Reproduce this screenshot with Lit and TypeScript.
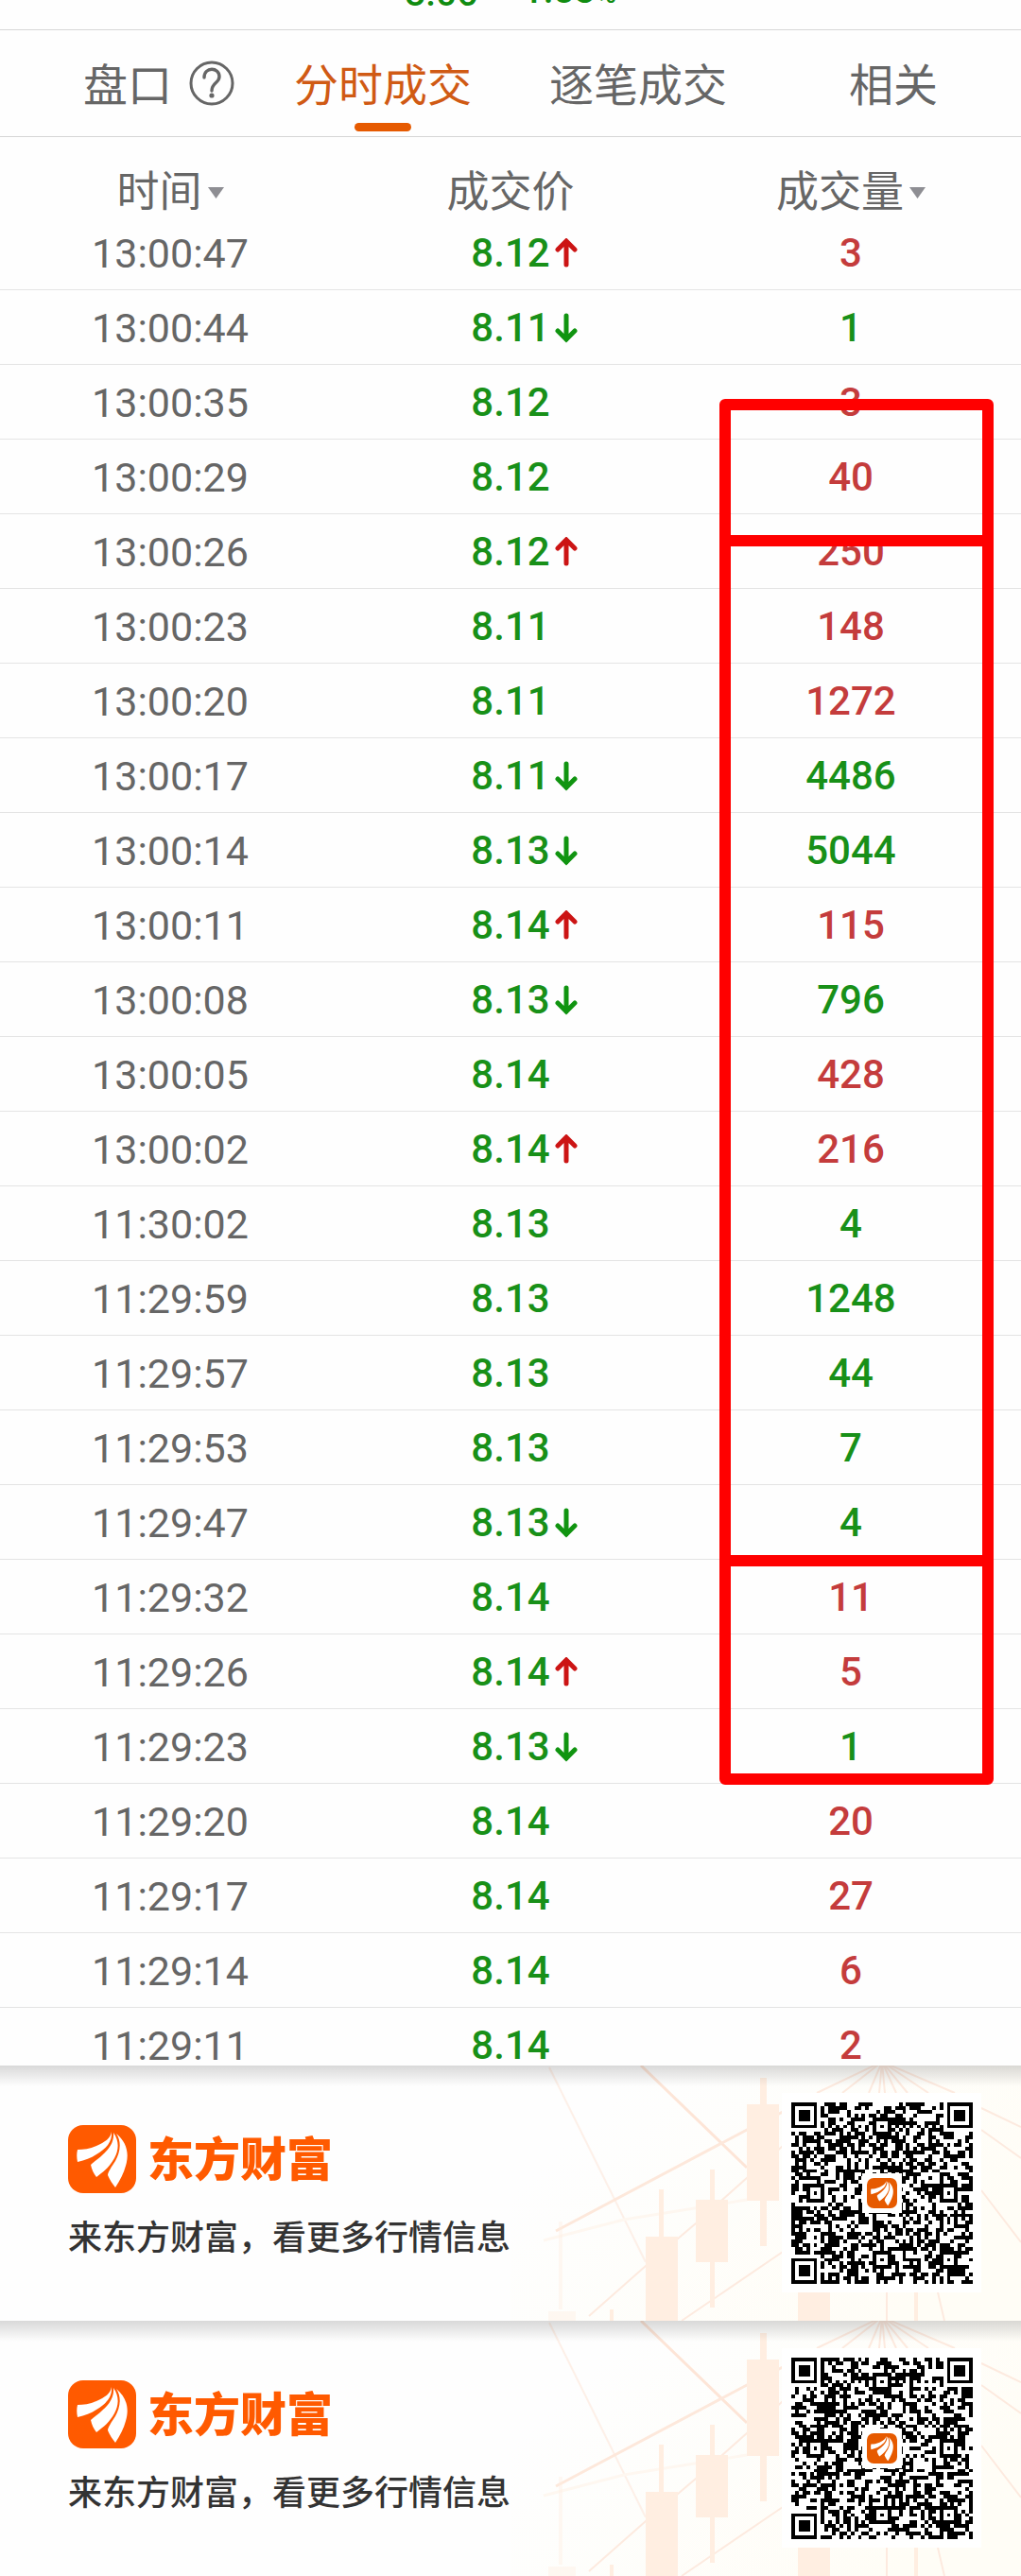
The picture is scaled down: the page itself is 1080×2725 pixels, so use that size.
import { LitElement, html, css, svg } from "lit";
import { customElement, property } from "lit/decorators.js";

type Dir = "up" | "down" | "";
type Side = "buy" | "sell";
type Tick = [time: string, price: string, dir: Dir, volume: string, side: Side];

const TICKS: Tick[] = [
  ["13:00:47", "8.12", "up", "3", "buy"],
  ["13:00:44", "8.11", "down", "1", "sell"],
  ["13:00:35", "8.12", "", "3", "buy"],
  ["13:00:29", "8.12", "", "40", "buy"],
  ["13:00:26", "8.12", "up", "250", "buy"],
  ["13:00:23", "8.11", "", "148", "buy"],
  ["13:00:20", "8.11", "", "1272", "buy"],
  ["13:00:17", "8.11", "down", "4486", "sell"],
  ["13:00:14", "8.13", "down", "5044", "sell"],
  ["13:00:11", "8.14", "up", "115", "buy"],
  ["13:00:08", "8.13", "down", "796", "sell"],
  ["13:00:05", "8.14", "", "428", "buy"],
  ["13:00:02", "8.14", "up", "216", "buy"],
  ["11:30:02", "8.13", "", "4", "sell"],
  ["11:29:59", "8.13", "", "1248", "sell"],
  ["11:29:57", "8.13", "", "44", "sell"],
  ["11:29:53", "8.13", "", "7", "sell"],
  ["11:29:47", "8.13", "down", "4", "sell"],
  ["11:29:32", "8.14", "", "11", "buy"],
  ["11:29:26", "8.14", "up", "5", "buy"],
  ["11:29:23", "8.13", "down", "1", "sell"],
  ["11:29:20", "8.14", "", "20", "buy"],
  ["11:29:17", "8.14", "", "27", "buy"],
  ["11:29:14", "8.14", "", "6", "buy"],
  ["11:29:11", "8.14", "", "2", "buy"],
];

const QR_SIZE = 49;
const ALIGN = [[24, 6], [6, 24], [42, 24], [24, 42], [42, 42]];

/* Builds the dark modules of a 49x49 code as one path. */
function qrPath(seed: number): string {
  let s = seed;
  const next = () => {
    s = (Math.imul(s, 1664525) + 1013904223) >>> 0;
    return s / 4294967296;
  };
  const finder = (x: number, y: number, cx: number, cy: number): boolean | null => {
    const d = Math.max(Math.abs(x - cx), Math.abs(y - cy));
    if (d > 4) return null;
    return d !== 4 && d !== 2;
  };
  let path = "";
  for (let y = 0; y < QR_SIZE; y++) {
    for (let x = 0; x < QR_SIZE; x++) {
      let dark = next() < 0.52;
      if (x === 6 || y === 6) dark = (x + y) % 2 === 0;
      for (const [ax, ay] of ALIGN) {
        const d = Math.max(Math.abs(x - ax), Math.abs(y - ay));
        if (d <= 2) dark = d !== 1;
      }
      for (const [cx, cy] of [[3, 3], [45, 3], [3, 45]]) {
        const f = finder(x, y, cx, cy);
        if (f !== null) dark = f;
      }
      if (dark) path += `M${x} ${y}h1v1h-1z`;
    }
  }
  return path;
}

const mark = (fill: string) => svg`
  <rect width="72" height="72" rx="16" fill=${fill}></rect>
  <path fill="#fff" d="M46 7C45 14 39 18 30 22C23 25 16 26 10 26C9 30 9 34 10 39C18 37 24 35 30 31C40 25 47 18 46 7Z"></path>
  <path fill="#fff" d="M48 8C49 17 44 25 37 31C32 36 27 39 24 42C25 47 27 51 30 55C38 49 44 44 49 35C54 26 54 16 48 8Z"></path>
  <path fill="#fff" d="M51 9C57 18 55 29 50 38C46 44 42 50 42 53C44 58 47 62 50 66C55 58 59 51 61 43C65 30 62 18 51 9Z"></path>
`;

@customElement("promo-banner")
export class PromoBanner extends LitElement {
  @property({ type: Number }) seed = 1;

  static styles = css`
    :host {
      display: block;
    }
    .banner {
      position: relative;
      display: flex;
      align-items: flex-start;
      justify-content: space-between;
      height: 270px;
      box-sizing: border-box;
      padding: 29px 42px 0 72px;
      overflow: hidden;
      background: #fefefe;
    }
    .art {
      position: absolute;
      top: 0;
      right: 0;
      width: 540px;
      height: 270px;
    }
    .shade {
      position: absolute;
      top: 0;
      left: 0;
      right: 0;
      height: 22px;
      background: linear-gradient(rgba(0, 0, 0, 0.15), rgba(0, 0, 0, 0));
    }
    .info {
      position: relative;
      display: flex;
      flex-direction: column;
      gap: 22px;
      padding-top: 34px;
    }
    .brand {
      display: flex;
      align-items: center;
      gap: 12px;
      height: 72px;
    }
    .logo {
      width: 72px;
      height: 72px;
    }
    .name {
      padding-top: 4px;
      color: #ff5a00;
      font-size: 49px;
      font-weight: 900;
      line-height: 72px;
    }
    .slogan {
      margin: 0;
      color: #333;
      font-size: 36px;
      font-weight: 500;
      line-height: 52px;
      white-space: nowrap;
    }
    .code {
      position: relative;
      width: 211px;
      height: 211px;
      flex: none;
    }
  `;

  render() {
    return html`
      <section class="banner">
        <svg class="art" viewBox="0 0 540 270" aria-hidden="true">
          <defs>
            <linearGradient id="tint" x1="0" y1="0" x2="1" y2="0.5">
              <stop offset="0.2" stop-color="#fffdf6" stop-opacity="0"></stop>
              <stop offset="1" stop-color="#fffdf6"></stop>
            </linearGradient>
          </defs>
          <rect width="540" height="270" fill="url(#tint)"></rect>
          <g fill="none" stroke="#fdeadf" stroke-width="2">
            <path d="M138 0L250 108" stroke="#fde5d7" stroke-width="3"></path>
            <path d="M41 2L143 208" stroke="#fdf0e8"></path>
            <path d="M48 175L250 68L288 49" stroke="#fde8db" stroke-width="3"></path>
            <path d="M83 265L143 212L196 167L288 85"></path>
            <path d="M181 270L288 197"></path>
            <path d="M35 185L120 163L250 142" stroke="#fef7f0" stroke-width="3"></path>
            <path d="M393 -4L324 29M393 -4L351 29M393 -4L379 29M393 -4L390 29M393 -4L396 29M393 -4L408 29M393 -4L420 29M393 -4L442 29M393 -4L470 29"></path>
            <path d="M498 45L540 65M498 68L540 98M498 132L540 187M398 240V270M452 240L459 270"></path>
          </g>
          <g fill="#ffeee1">
            <path d="M157 131h5v50h-5zM143 181h34v89h-34z"></path>
            <path d="M211 110h5v32h-5zM211 208h5v48h-5zM196 142h34v66h-34z"></path>
            <path d="M264 13h7v28h-7zM264 143h7v48h-7zM250 41h34v102h-34z"></path>
            <path d="M304 240h34v30h-34zM427 240h4v30h-4zM105 258h4v12h-4z"></path>
            <path d="M51 165h4v93h-4zM40 260h29v10h-29z" opacity="0.4"></path>
          </g>
        </svg>
        <div class="shade"></div>
        <div class="info">
          <div class="brand">
            <svg class="logo" viewBox="0 0 72 72" aria-hidden="true">${mark("#ff5a00")}</svg>
            <span class="name">东方财富</span>
          </div>
          <p class="slogan">来东方财富，看更多行情信息</p>
        </div>
        <svg class="code" viewBox="0 0 211 211" aria-hidden="true">
          <rect width="211" height="211" fill="#fff"></rect>
          <svg x="10" y="10" width="192" height="192" viewBox="0 0 49 49" shape-rendering="crispEdges">
            <path d=${qrPath(this.seed)} fill="#000"></path>
          </svg>
          <rect x="85" y="85" width="42" height="42" fill="#fff"></rect>
          <svg x="90" y="90" width="32" height="32" viewBox="0 0 72 72">${mark("#e65a00")}</svg>
        </svg>
      </section>
    `;
  }
}

@customElement("app-root")
export class AppRoot extends LitElement {
  static styles = css`
    :host {
      display: block;
      background: #fefefe;
      color: #666;
      font-family: Roboto, "Noto Sans CJK SC", sans-serif;
    }
    .quote {
      display: flex;
      align-items: flex-end;
      justify-content: center;
      gap: 34px;
      height: 31px;
      overflow: hidden;
      border-bottom: 1px solid #d6d6d6;
      color: #108c10;
      font-size: 39px;
      font-weight: 500;
      line-height: 76px;
    }
    .unit {
      font-size: 30px;
    }
    .tabs {
      display: grid;
      grid-template-columns: repeat(4, 1fr);
      height: 112px;
      border-bottom: 1px solid #d6d6d6;
    }
    .tab {
      display: grid;
      grid-template-columns: 1fr auto 1fr;
      grid-template-rows: 104px 8px;
      align-items: center;
      padding: 0;
      border: 0;
      background: none;
      color: inherit;
      font: inherit;
      font-size: 47px;
      line-height: 68px;
      white-space: nowrap;
    }
    .tab::after {
      content: "";
      grid-area: 2 / 2;
      justify-self: center;
      align-self: end;
      width: 60px;
      height: 9px;
      margin-bottom: 5px;
      border-radius: 5px;
    }
    .tab.active {
      color: #d05a14;
    }
    .tab.active::after {
      background: #e65a00;
    }
    .label {
      grid-area: 1 / 2;
      padding-top: 14px;
    }
    .help {
      grid-area: 1 / 3;
      width: 48px;
      height: 48px;
      margin-left: 18px;
      padding-top: 8px;
    }
    .list {
      position: relative;
      height: 2040px;
      overflow: hidden;
    }
    .ticks {
      width: 100%;
      border-collapse: collapse;
      table-layout: fixed;
      font-size: 43px;
      line-height: 50px;
      text-align: center;
    }
    th {
      height: 83px;
      padding: 0;
      font-size: 45px;
      font-weight: 400;
    }
    .head {
      display: flex;
      align-items: center;
      justify-content: center;
      height: 83px;
      padding-top: 34px;
      box-sizing: border-box;
    }
    .sort {
      display: flex;
      align-items: center;
      gap: 6px;
      padding: 0;
      border: 0;
      background: none;
      color: inherit;
      font: inherit;
    }
    .caret {
      width: 17px;
      height: 12px;
    }
    td {
      height: 76px;
      padding: 2px 0 0;
      border-bottom: 1px solid #e4e4e4;
    }
    .price {
      display: grid;
      grid-template-columns: 1fr auto 1fr;
      align-items: center;
    }
    .value {
      grid-column: 2;
    }
    .arrow {
      width: 25px;
      height: 32px;
      margin-left: 5px;
    }
    .price,
    .volume {
      font-size: 42px;
      font-weight: 500;
    }
    .price,
    .sell {
      color: #189018;
    }
    .buy {
      color: #c43c3c;
    }
    .frame {
      position: absolute;
      left: 70.5%;
      right: 2.7%;
      box-sizing: border-box;
      border: 12px solid #f00;
      border-radius: 6px;
    }
    .first {
      top: 277px;
      height: 156px;
    }
    .second {
      top: 421px;
      height: 1091px;
    }
    .third {
      top: 1500px;
      height: 243px;
    }
  `;

  private caret() {
    return html`<svg class="caret" viewBox="0 0 17 12" aria-hidden="true">
      <path d="M0 0H17L8.5 12Z" fill="#8e8e93"></path>
    </svg>`;
  }

  private arrow(dir: Dir) {
    if (!dir) return "";
    return dir === "up"
      ? html`<svg class="arrow" viewBox="0 0 25 32" aria-label="上涨">
          <path d="M12 28V3M3 12L12 3L21 12" fill="none" stroke="#cc1414" stroke-width="5" stroke-linecap="round"></path>
        </svg>`
      : html`<svg class="arrow" viewBox="0 0 25 32" aria-label="下跌">
          <path d="M12 3V28M3 19L12 28L21 19" fill="none" stroke="#109410" stroke-width="5" stroke-linecap="round"></path>
        </svg>`;
  }

  render() {
    return html`
      <header class="quote"><span>8.06</span><span>-1.83<span class="unit">%</span></span></header>
      <nav class="tabs">
        <button class="tab">
          <span class="label">盘口</span>
          <svg class="help" viewBox="0 0 48 48" aria-hidden="true">
            <circle cx="24" cy="24" r="22" fill="none" stroke="#666" stroke-width="3"></circle>
            <path d="M16 18C16 6 32 7 32 17C32 24 24 23 24 32" fill="none" stroke="#666" stroke-width="3.4" stroke-linecap="round"></path>
            <circle cx="24" cy="37" r="2.6" fill="#666"></circle>
          </svg>
        </button>
        <button class="tab active"><span class="label">分时成交</span></button>
        <button class="tab"><span class="label">逐笔成交</span></button>
        <button class="tab"><span class="label">相关</span></button>
      </nav>
      <main class="list">
        <table class="ticks">
          <thead>
            <tr>
              <th><div class="head"><button class="sort">时间${this.caret()}</button></div></th>
              <th><div class="head">成交价</div></th>
              <th><div class="head"><button class="sort">成交量${this.caret()}</button></div></th>
            </tr>
          </thead>
          <tbody>
            ${TICKS.map(
              ([time, price, dir, volume, side]) => html`<tr>
                <td>${time}</td>
                <td><div class="price"><span class="value">${price}</span>${this.arrow(dir)}</div></td>
                <td class="volume ${side}">${volume}</td>
              </tr>`
            )}
          </tbody>
        </table>
        <div class="frame first"></div>
        <div class="frame second"></div>
        <div class="frame third"></div>
      </main>
      <promo-banner .seed=${20240611}></promo-banner>
      <promo-banner .seed=${77123}></promo-banner>
    `;
  }
}
